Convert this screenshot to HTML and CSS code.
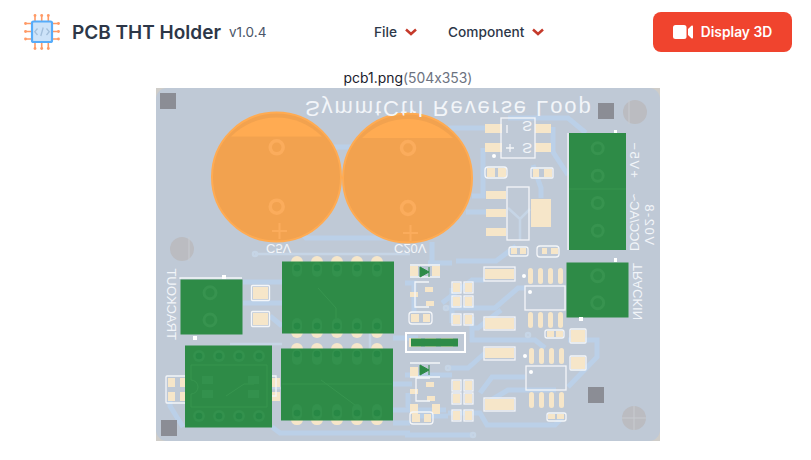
FILE: index.html
```html
<!DOCTYPE html>
<html lang="en">
<head>
    <meta charset="UTF-8">
    <meta name="viewport" content="width=device-width, initial-scale=1.0">
    <title>PCB THT Holder</title>
    <link rel="stylesheet" href="styles.css">
</head>
<body>

    <header class="topbar">
        <div class="brand">
            <svg class="logo" viewBox="0 0 36 36">
                <g class="logo-pins">
                    <path d="M11 1V7M17.7 1V7M24.3 1V7M11 28V35M17.7 28V35M24.3 28V35M1 9.5H8M1 17.5H8M1 25H8M28 9.5H35M28 17.5H35M28 25H35"/>
                </g>
                <g class="logo-ends">
                    <circle cx="11" cy="1.5" r="1.4"/><circle cx="17.7" cy="1.5" r="1.4"/><circle cx="24.3" cy="1.5" r="1.4"/>
                    <circle cx="11" cy="34.5" r="1.4"/><circle cx="17.7" cy="34.5" r="1.4"/><circle cx="24.3" cy="34.5" r="1.4"/>
                    <circle cx="1.5" cy="9.5" r="1.4"/><circle cx="1.5" cy="17.5" r="1.4"/><circle cx="1.5" cy="25" r="1.4"/>
                    <circle cx="34.5" cy="9.5" r="1.4"/><circle cx="34.5" cy="17.5" r="1.4"/><circle cx="34.5" cy="25" r="1.4"/>
                </g>
                <rect class="logo-body" x="8" y="7.5" width="20" height="20.5" rx="1.5"/>
                <path class="logo-code" d="M13.5 14.5L10.8 17.7L13.5 21M22.5 14.5L25.2 17.7L22.5 21M19.2 13.5L16.8 22"/>
            </svg>
            <h1 class="title">PCB THT Holder</h1>
            <span class="version">v1.0.4</span>
        </div>

        <nav class="menu">
            <a class="menu-item">File
                <svg class="chevron" viewBox="0 0 12 8"><path d="M1 1.5L6 6L11 1.5"/></svg>
            </a>
            <a class="menu-item">Component
                <svg class="chevron" viewBox="0 0 12 8"><path d="M1 1.5L6 6L11 1.5"/></svg>
            </a>
        </nav>

        <button class="btn-3d" type="button">
            <svg class="video-icon" viewBox="0 0 20 14">
                <rect x="0" y="0" width="13.5" height="14" rx="2.5"/>
                <path d="M15 4L18.4 0.8Q20 0 20 1.5V12.5Q20 14 18.4 13.2L15 10Z"/>
            </svg>
            Display 3D
        </button>
    </header>

    <main class="stage">
        <p class="caption">pcb1.png<span class="dims">(504x353)</span></p>

        <svg class="board" viewBox="0 0 504 353" width="504" height="353">
            <rect class="board-corner" width="504" height="353"/>
            <rect class="board-base" width="504" height="353" rx="11"/>

            <!-- copper traces -->
            <g class="trace">
                <path d="M170 59H200"/>
                <path d="M127 125L150 150H254"/>
                <path d="M292 40H329"/>
                <path d="M327 60V108H316"/>
                <path d="M310 124H330"/>
                <path d="M352 30H412L430 45"/>
                <path d="M397 39V64L412 87"/>
                <path d="M377 77L385 100V110"/>
                <path d="M276 154V174"/>
                <path d="M87 194H126"/>
                <path d="M87 215H126"/>
                <path d="M114 228L126 238"/>
                <path d="M14 312V318L27 339"/>
                <path d="M116 339L124 345H254"/>
                <path d="M237 335H254"/>
                <path d="M286 215L316 192H328"/>
                <path d="M289 220H339L362 200H369"/>
                <path d="M316 229V252H379L389 260"/>
                <path d="M292 280H312L329 265"/>
                <path d="M324 305L336 289H369"/>
                <path d="M330 315L352 302H400"/>
                <path d="M292 325H324L331 337H399L406 330"/>
                <path d="M412 252H441V269L412 299"/>
                <path d="M249 287H296"/>
                <path d="M249 347H317"/>
                <path d="M300 173H340L360 158"/>
                <path d="M249 195H258V225"/>
                <path d="M237 250H262"/>
                <path d="M296 200V235"/>
                <path d="M272 175H296"/>
                <path d="M252 305V318L262 328H292"/>
                <path d="M317 240H322L345 222"/>
                <path d="M236 296H256"/>
                <path d="M237 322H290"/>
            </g>
            <g class="trace-thin">
                <path d="M99 166H254"/>
                <path d="M74 256H126"/>
                <path d="M214 245V262"/>
                <path d="M110 300H125"/>
                <path d="M352 120L364 131L374 121M364 131V152"/>
                <circle cx="99" cy="166" r="2"/>
                <circle cx="317" cy="347" r="2"/>
                <circle cx="290" cy="220" r="2"/>
                <circle cx="292" cy="280" r="2"/>
                <circle cx="372" cy="247" r="2"/>
            </g>

            <!-- mounting marks -->
            <rect class="mark" x="4" y="5" width="16" height="16"/>
            <rect class="mark" x="442" y="15" width="16" height="16"/>
            <rect class="mark" x="5" y="332" width="16" height="16"/>
            <rect class="mark" x="432" y="299" width="16" height="16"/>
            <circle class="hole" cx="26" cy="161" r="12"/>
            <circle class="hole" cx="479" cy="24" r="12"/>
            <circle class="hole" cx="478" cy="330" r="12"/>
            <path class="hole-cross" d="M33 149V173M473 12V36M478 318V342M466 330H490"/>

            <!-- capacitors -->
            <circle class="cap" cx="120.5" cy="89" r="64.5"/>
            <circle class="cap" cx="251.5" cy="90" r="64.5"/>
            <path class="cap-top" d="M75 48.5A64 64 0 0 1 166 48.5Z"/>
            <path class="cap-top" d="M206 50A64 64 0 0 1 297 50Z"/>
            <g class="cap-ring">
                <circle cx="120.7" cy="59.3" r="6.5"/>
                <circle cx="120.7" cy="118.7" r="6.5"/>
                <circle cx="252" cy="60" r="6.5"/>
                <circle cx="252" cy="120" r="6.5"/>
            </g>
            <path class="cap-plus" d="M116 143H131M123.5 135V151M247 145H262M254.5 137V153"/>

            <!-- board text, printed mirrored -->
            <text class="silk-text big" transform="matrix(1 0 0 -1 149 13)">SymmtCtrl Reverse Loop</text>
            <text class="silk-text" transform="matrix(1 0 0 -1 110 156)">C5V</text>
            <text class="silk-text" transform="matrix(1 0 0 -1 238 156)">C20V</text>
            <text class="silk-text" transform="matrix(0 -1 -1 0 11 252)">TRACKOUT</text>
            <text class="silk-text" transform="matrix(0 1 1 0 486 175)">TRACKIN</text>
            <text class="silk-text spaced" transform="matrix(0 -1 -1 0 474 90)">+V5−</text>
            <text class="silk-text" transform="matrix(0 -1 -1 0 474 163)">DCC/AC~</text>
            <text class="silk-text spaced" transform="matrix(0 -1 -1 0 489 157)">V02-8</text>

            <!-- top right ic and parts -->
            <g class="pad">
                <rect x="329" y="36" width="17" height="9"/>
                <rect x="329" y="55" width="17" height="9"/>
                <rect x="379" y="36" width="16" height="9"/>
                <rect x="379" y="55" width="16" height="9"/>
                <rect x="331" y="80" width="8" height="9"/>
                <rect x="342" y="80" width="8" height="9"/>
                <rect x="377" y="81" width="6" height="8"/>
                <rect x="388" y="81" width="8" height="8"/>
                <rect x="330" y="103" width="20" height="8"/>
                <rect x="330" y="121" width="20" height="8"/>
                <rect x="330" y="140" width="20" height="8"/>
                <rect x="375" y="111" width="20" height="28"/>
                <rect x="355" y="160" width="6" height="6"/>
                <rect x="364" y="160" width="6" height="6"/>
                <rect x="386" y="160" width="5" height="6"/>
                <rect x="395" y="160" width="7" height="6"/>
            </g>
            <g class="silk">
                <rect x="345" y="30" width="34" height="40"/>
                <rect x="329" y="79" width="22" height="11" rx="3"/>
                <rect x="375" y="80" width="22" height="10" rx="1"/>
                <rect x="351" y="99" width="22" height="53"/>
                <rect x="353" y="159" width="19" height="9" rx="2"/>
                <rect x="381" y="158" width="22" height="11" rx="3"/>
            </g>
            <text class="silk-text ic-mark" transform="matrix(1 0 0 -1 366 33)">S</text>
            <text class="silk-text ic-mark" transform="matrix(1 0 0 -1 366 55)">S</text>
            <path class="silk" d="M350 60H358M354 56V64M351 37V45"/>
            <circle class="dot" cx="338" cy="68" r="2"/>

            <!-- left side parts -->
            <g class="pad">
                <rect x="97" y="199" width="15" height="12"/>
                <rect x="97" y="225" width="15" height="12"/>
                <rect x="12" y="290" width="7" height="9"/>
                <rect x="12" y="304" width="7" height="9"/>
                <rect x="24" y="290" width="6" height="9"/>
                <rect x="24" y="304" width="6" height="9"/>
                <rect x="116" y="290" width="8" height="9"/>
                <rect x="116" y="304" width="8" height="9"/>
                <rect x="135" y="168" width="12" height="12" rx="6"/>
                <rect x="155" y="168" width="12" height="12" rx="6"/>
                <rect x="175" y="168" width="12" height="12" rx="6"/>
                <rect x="195" y="168" width="12" height="12" rx="6"/>
                <rect x="215" y="168" width="12" height="12" rx="6"/>
                <rect x="135" y="238" width="12" height="12" rx="6"/>
                <rect x="155" y="238" width="12" height="12" rx="6"/>
                <rect x="175" y="238" width="12" height="12" rx="6"/>
                <rect x="195" y="238" width="12" height="12" rx="6"/>
                <rect x="215" y="238" width="12" height="12" rx="6"/>
                <rect x="135" y="255" width="12" height="12" rx="6"/>
                <rect x="155" y="255" width="12" height="12" rx="6"/>
                <rect x="175" y="255" width="12" height="12" rx="6"/>
                <rect x="195" y="255" width="12" height="12" rx="6"/>
                <rect x="215" y="255" width="12" height="12" rx="6"/>
                <rect x="135" y="326" width="12" height="11" rx="5.5"/>
                <rect x="155" y="326" width="12" height="11" rx="5.5"/>
                <rect x="175" y="326" width="12" height="11" rx="5.5"/>
                <rect x="195" y="326" width="12" height="11" rx="5.5"/>
                <rect x="215" y="326" width="12" height="11" rx="5.5"/>
            </g>
            <g class="silk">
                <rect x="95.5" y="197.5" width="18" height="15" rx="1"/>
                <rect x="95.5" y="223.5" width="18" height="15" rx="1"/>
                <rect x="10" y="288" width="21" height="27" rx="1"/>
                <path d="M115 288H120V308H115M24 191V190H86"/>
            </g>
            <rect class="dot" x="66" y="187" width="4" height="4"/>
            <rect class="dot" x="37" y="248" width="4" height="4"/>

            <!-- center and lower right parts -->
            <g class="pad">
                <rect x="254" y="178" width="8" height="10"/>
                <rect x="276" y="178" width="8" height="10"/>
                <rect x="254" y="316" width="8" height="10"/>
                <rect x="276" y="316" width="8" height="10"/>
                <rect x="269" y="199" width="8" height="5"/>
                <rect x="254" y="204" width="8" height="5"/>
                <rect x="270" y="213" width="8" height="5"/>
                <rect x="270" y="294" width="8" height="5"/>
                <rect x="254" y="301" width="8" height="5"/>
                <rect x="271" y="308" width="8" height="5"/>
                <rect x="297" y="195" width="7" height="9"/>
                <rect x="309" y="195" width="7" height="9"/>
                <rect x="297" y="209" width="7" height="9"/>
                <rect x="309" y="209" width="7" height="9"/>
                <rect x="297" y="227" width="7" height="9"/>
                <rect x="309" y="227" width="7" height="9"/>
                <rect x="297" y="293" width="7" height="9"/>
                <rect x="309" y="293" width="7" height="9"/>
                <rect x="297" y="306" width="7" height="9"/>
                <rect x="309" y="306" width="7" height="9"/>
                <rect x="297" y="323" width="7" height="9"/>
                <rect x="309" y="323" width="7" height="9"/>
                <rect x="255" y="226" width="8" height="8"/>
                <rect x="267" y="226" width="7" height="8"/>
                <rect x="256" y="326" width="8" height="8"/>
                <rect x="268" y="326" width="7" height="8"/>
                <rect x="329" y="181" width="29" height="10"/>
                <rect x="329" y="230" width="29" height="11"/>
                <rect x="329" y="260" width="29" height="10"/>
                <rect x="329" y="311" width="29" height="11"/>
                <rect x="372" y="180" width="5" height="16" rx="2.5"/>
                <rect x="382" y="180" width="5" height="16" rx="2.5"/>
                <rect x="392" y="180" width="5" height="16" rx="2.5"/>
                <rect x="402" y="180" width="5" height="16" rx="2.5"/>
                <rect x="372" y="224" width="5" height="16" rx="2.5"/>
                <rect x="382" y="224" width="5" height="16" rx="2.5"/>
                <rect x="392" y="224" width="5" height="16" rx="2.5"/>
                <rect x="402" y="224" width="5" height="16" rx="2.5"/>
                <rect x="373" y="260" width="5" height="16" rx="2.5"/>
                <rect x="383" y="260" width="5" height="16" rx="2.5"/>
                <rect x="393" y="260" width="5" height="16" rx="2.5"/>
                <rect x="403" y="260" width="5" height="16" rx="2.5"/>
                <rect x="373" y="304" width="5" height="16" rx="2.5"/>
                <rect x="383" y="304" width="5" height="16" rx="2.5"/>
                <rect x="393" y="304" width="5" height="16" rx="2.5"/>
                <rect x="403" y="304" width="5" height="16" rx="2.5"/>
                <rect x="391" y="243" width="7" height="6"/>
                <rect x="400" y="243" width="7" height="6"/>
                <rect x="392" y="326" width="7" height="5"/>
                <rect x="401" y="326" width="7" height="5"/>
                <rect x="415" y="242" width="14" height="12"/>
                <rect x="415" y="269" width="14" height="12"/>
                <rect x="253" y="250" width="12" height="9"/>
                <rect x="269" y="250" width="11" height="9"/>
                <rect x="285" y="250" width="12" height="9"/>
                <rect x="254" y="279" width="8" height="10"/>
            </g>
            <g class="silk">
                <path d="M254 177H284M254 189H284M254 275H284M254 289H284"/>
                <path d="M273 194H259V219H273M274 290H260V313H274"/>
                <rect x="253" y="224" width="23" height="12" rx="3"/>
                <rect x="254" y="324" width="23" height="12" rx="3"/>
                <rect x="296" y="194" width="9" height="11"/>
                <rect x="308" y="194" width="9" height="11"/>
                <rect x="296" y="208" width="9" height="11"/>
                <rect x="308" y="208" width="9" height="11"/>
                <rect x="296" y="226" width="9" height="11"/>
                <rect x="308" y="226" width="9" height="11"/>
                <rect x="296" y="292" width="9" height="11"/>
                <rect x="308" y="292" width="9" height="11"/>
                <rect x="296" y="305" width="9" height="11"/>
                <rect x="308" y="305" width="9" height="11"/>
                <rect x="296" y="322" width="9" height="11"/>
                <rect x="308" y="322" width="9" height="11"/>
                <rect x="328" y="179" width="31" height="14"/>
                <rect x="328" y="229" width="31" height="13"/>
                <rect x="328" y="259" width="31" height="13"/>
                <rect x="328" y="310" width="31" height="13"/>
                <rect x="369" y="198" width="40" height="24"/>
                <rect x="370" y="278" width="40" height="24"/>
                <rect x="389" y="242" width="19" height="8" rx="2"/>
                <rect x="391" y="325" width="19" height="8" rx="2"/>
                <rect x="414" y="241" width="16" height="14" rx="1"/>
                <rect x="414" y="268" width="16" height="14" rx="1"/>
            </g>
            <rect class="silk-strong" x="250" y="245" width="59" height="19"/>
            <circle class="dot" cx="368" cy="188" r="2"/>
            <circle class="dot" cx="374" cy="204" r="2"/>
            <circle class="dot" cx="369" cy="268" r="2"/>
            <circle class="dot" cx="375" cy="284" r="2"/>
            <path class="diode" d="M264 179L273 184L264 189ZM273 179V189M264 277L273 282L264 287ZM273 277V287"/>

            <!-- green holder outlines -->
            <path class="silk" d="M412 45V162"/>
            <rect class="green" x="413" y="45" width="57" height="117"/>
            <path class="green-line" d="M413 101H470"/>
            <g class="green-ring">
                <circle cx="441.7" cy="60.3" r="5.5"/>
                <circle cx="441.7" cy="87.7" r="5.5"/>
                <circle cx="441.7" cy="115" r="5.5"/>
                <circle cx="441.7" cy="142.7" r="5.5"/>
            </g>
            <rect class="dot" x="458" y="42" width="3" height="3"/>
            <rect class="dot" x="458" y="170" width="3" height="4"/>

            <rect class="green" x="410.5" y="174.5" width="62" height="55"/>
            <g class="green-ring">
                <circle cx="441.7" cy="187.7" r="6"/>
                <circle cx="441.7" cy="214.7" r="6"/>
            </g>
            <rect class="dot" x="423" y="229" width="4" height="4"/>

            <rect class="green" x="24.5" y="191.5" width="62" height="55"/>
            <g class="green-ring">
                <circle cx="54" cy="204.7" r="6"/>
                <circle cx="54" cy="232" r="6"/>
            </g>

            <rect class="green" x="126" y="173.5" width="112" height="72"/>
            <rect class="green" x="125" y="260.5" width="112" height="72"/>
            <path class="green-line" d="M162 200L180 220V245M165 292L203 320M126 296H236"/>
            <g class="green-pin">
                <rect x="136" y="174" width="10" height="15" rx="5"/>
                <rect x="156" y="174" width="10" height="15" rx="5"/>
                <rect x="176" y="174" width="10" height="15" rx="5"/>
                <rect x="196" y="174" width="10" height="15" rx="5"/>
                <rect x="216" y="174" width="10" height="15" rx="5"/>
                <rect x="136" y="230" width="10" height="15" rx="5"/>
                <rect x="156" y="230" width="10" height="15" rx="5"/>
                <rect x="176" y="230" width="10" height="15" rx="5"/>
                <rect x="196" y="230" width="10" height="15" rx="5"/>
                <rect x="216" y="230" width="10" height="15" rx="5"/>
                <rect x="136" y="261" width="10" height="16" rx="5"/>
                <rect x="156" y="261" width="10" height="16" rx="5"/>
                <rect x="176" y="261" width="10" height="16" rx="5"/>
                <rect x="196" y="261" width="10" height="16" rx="5"/>
                <rect x="216" y="261" width="10" height="16" rx="5"/>
                <rect x="136" y="316" width="10" height="16" rx="5"/>
                <rect x="156" y="316" width="10" height="16" rx="5"/>
                <rect x="176" y="316" width="10" height="16" rx="5"/>
                <rect x="196" y="316" width="10" height="16" rx="5"/>
                <rect x="216" y="316" width="10" height="16" rx="5"/>
            </g>
            <g class="green-core">
                <circle cx="141" cy="180" r="3.3"/><circle cx="161" cy="180" r="3.3"/><circle cx="181" cy="180" r="3.3"/><circle cx="201" cy="180" r="3.3"/><circle cx="221" cy="180" r="3.3"/>
                <circle cx="141" cy="238" r="3.3"/><circle cx="161" cy="238" r="3.3"/><circle cx="181" cy="238" r="3.3"/><circle cx="201" cy="238" r="3.3"/><circle cx="221" cy="238" r="3.3"/>
                <circle cx="141" cy="266" r="3.3"/><circle cx="161" cy="266" r="3.3"/><circle cx="181" cy="266" r="3.3"/><circle cx="201" cy="266" r="3.3"/><circle cx="221" cy="266" r="3.3"/>
                <circle cx="141" cy="325" r="3.3"/><circle cx="161" cy="325" r="3.3"/><circle cx="181" cy="325" r="3.3"/><circle cx="201" cy="325" r="3.3"/><circle cx="221" cy="325" r="3.3"/>
            </g>

            <rect class="green" x="29" y="257.5" width="87" height="82"/>
            <path class="green-line" d="M35 277H111V319H35V306A7 7 0 0 0 35 292ZM70 308L88 296H98"/>
            <g class="green-pin">
                <circle cx="43" cy="268" r="6"/>
                <circle cx="63" cy="268" r="6"/>
                <circle cx="83" cy="268" r="6"/>
                <circle cx="103" cy="268" r="6"/>
                <circle cx="43" cy="328" r="6"/>
                <circle cx="63" cy="328" r="6"/>
                <circle cx="83" cy="328" r="6"/>
                <circle cx="103" cy="328" r="6"/>
                <rect x="46" y="288" width="11" height="8"/>
                <rect x="46" y="302" width="11" height="8"/>
                <rect x="92" y="288" width="11" height="8"/>
                <rect x="92" y="302" width="11" height="8"/>
            </g>
            <g class="green-core">
                <circle cx="43" cy="268" r="3.3"/><circle cx="63" cy="268" r="3.3"/><circle cx="83" cy="268" r="3.3"/><circle cx="103" cy="268" r="3.3"/>
                <circle cx="43" cy="328" r="3.3"/><circle cx="63" cy="328" r="3.3"/><circle cx="83" cy="328" r="3.3"/><circle cx="103" cy="328" r="3.3"/>
            </g>

            <rect class="green" x="255" y="250.5" width="47" height="8"/>
        </svg>
    </main>

</body>
</html>
```

FILE: styles.css
```css
* { box-sizing: border-box; }
body { margin: 0; font-family: Inter, "Liberation Sans", sans-serif; font-feature-settings: "calt" 0; background: #fff; color: #2d3748; }

.topbar { display: flex; align-items: center; height: 64px; padding: 0 19px 0 24px; }
.brand { display: flex; align-items: center; width: 350px; }
.logo { width: 36px; height: 36px; margin-right: 12px; }
.logo-pins path { fill: none; stroke: #ff9a66; stroke-width: 1.6; }
.logo-ends circle { fill: #ff9a66; }
.logo-body { fill: #cde3f9; stroke: #56acfa; stroke-width: 2.2; }
.logo-code { fill: none; stroke: #a3bfdb; stroke-width: 1.3; }
.title { margin: 0 8px 0 0; font-size: 19px; font-weight: 600; color: #2d3748; }
.version { font-size: 13.5px; color: #4a5568; }

.menu { display: flex; gap: 31px; font-size: 13.7px; font-weight: 500; }
.menu-item { display: flex; align-items: center; gap: 8px; color: #2d3748; }
.chevron { width: 12px; height: 8px; }
.chevron path { fill: none; stroke: #c53a2b; stroke-width: 2.5; }

.btn-3d { display: flex; align-items: center; justify-content: center; gap: 8px; width: 139px; height: 40px; margin-left: auto; border: 0; border-radius: 8px; background: #f0442e; color: #fff; font-family: inherit; font-size: 13.8px; font-weight: 600; }
.video-icon { width: 20px; height: 14px; fill: #fff; }

.stage { display: flex; flex-direction: column; align-items: center; padding-left: 5px; }
.caption { margin: 6px 0 2px; font-size: 13.9px; line-height: 16px; color: #1a202c; }
.dims { color: #6b7280; }
.board { display: block; }

.board-corner { fill: #cfcdc9; }
.board-base { fill: #bfc9d6; }
.trace path { fill: none; stroke: #bbd0e8; stroke-width: 5; }
.trace-thin path, .trace-thin circle { fill: none; stroke: #c6d5e6; stroke-width: 2.5; }
.mark { fill: #8b8d95; }
.hole { fill: #bbbcc1; }
.hole-cross { fill: none; stroke: #c8cbd0; stroke-width: 1; }
.silk-text { font-family: "Liberation Sans", sans-serif; font-size: 13px; fill: #f2f5f9; }
.silk-text.big { font-size: 22px; letter-spacing: 1.9px; }
.silk-text.spaced { letter-spacing: 1.5px; }
.silk-text.ic-mark { font-size: 15px; }
.cap { fill: #f2a24f; stroke: #ffab52; stroke-width: 2; }
.cap-top { fill: #ffab52; }
.cap-ring circle { fill: none; stroke: #fbac5c; stroke-width: 3.5; }
.cap-plus { fill: none; stroke: #fbac5c; stroke-width: 2; }
.pad rect { fill: #f6e6c9; }
.silk, .silk rect, .silk path { fill: none; stroke: #f4f6f9; stroke-width: 1.3; }
.silk-strong { fill: none; stroke: #fff; stroke-width: 2; }
.dot { fill: #fff; }
.diode { fill: #2e8b47; stroke: #2e8b47; stroke-width: 1; }
.green { fill: #2e8b47; }
.green-line { fill: none; stroke: #37954f; stroke-width: 1; }
.green-ring circle { fill: none; stroke: #37934f; stroke-width: 3; }
.green-pin rect, .green-pin circle { fill: #33914d; }
.green-core circle { fill: #278845; }
```
